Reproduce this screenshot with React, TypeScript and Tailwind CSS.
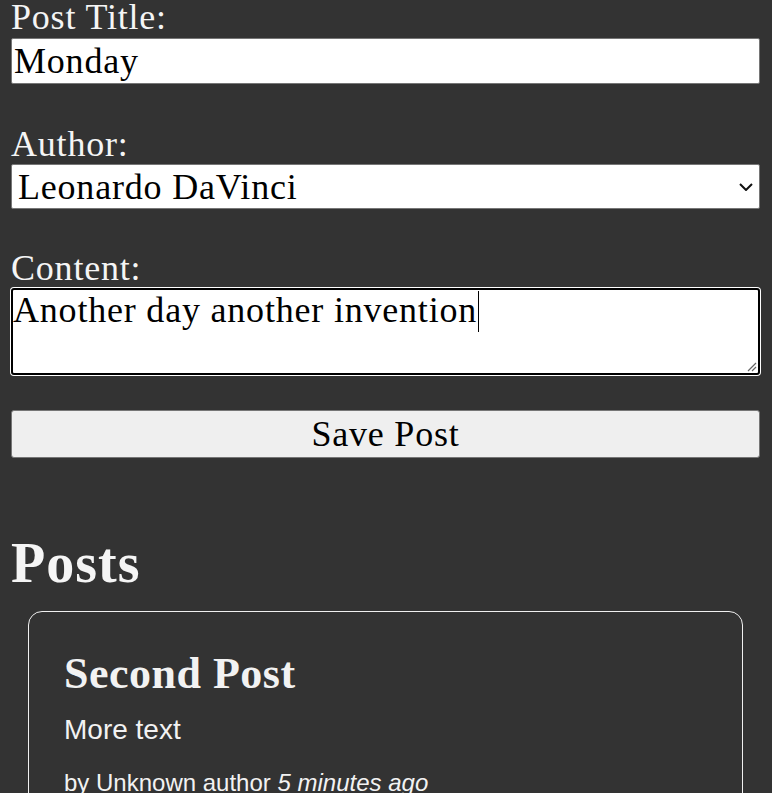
import React from "react";

const serif = { fontFamily: '"Liberation Serif", "Times New Roman", serif' };
const sans = { fontFamily: '"Liberation Sans", Arial, sans-serif' };

const Label = ({ children, className = "" }: { children: React.ReactNode; className?: string }) => (
  <label className={`block h-[36px] text-[36px] leading-[41px] tracking-[0.8px] text-[#f5f5f5] ${className}`}>
    {children}
  </label>
);

export default function App() {
  return (
    <div className="min-h-screen overflow-hidden bg-[#333333]" style={serif}>
      <form className="flex flex-col pl-[11px] pr-[12px]" onSubmit={(e) => e.preventDefault()}>
        <Label className="-mt-[3px] mb-[3px]">Post Title:</Label>
        <input
          defaultValue="Monday"
          className="mt-[2px] h-[46px] w-full rounded-[2px] border border-[#767676] bg-white px-[2px] text-[36px] leading-none tracking-[0.8px] text-black outline-none"
          style={serif}
        />

        <Label className="mt-[40px] mb-[3px]">Author:</Label>
        <div className="relative mt-[1px]">
          <select
            defaultValue="leo"
            className="h-[45px] w-full appearance-none rounded-[2px] border border-[#767676] bg-white pl-[6px] text-[36px] leading-none tracking-[0.8px] text-black outline-none"
            style={serif}
          >
            <option value="leo">Leonardo DaVinci</option>
          </select>
          <svg
            className="pointer-events-none absolute right-[7px] top-[19px]"
            width="14"
            height="8"
            viewBox="0 0 14 8"
          >
            <path d="M1 1 L7 7 L13 1" fill="none" stroke="#111" strokeWidth="2" />
          </svg>
        </div>

        <Label className="mt-[39px] mb-[3px]">Content:</Label>
        <div className="relative mt-[1px] h-[87px] rounded-[3px] border-2 border-black bg-white text-[36px] leading-[41px] tracking-[0.8px] text-black shadow-[0_0_0_1px_#ffffff]">
          <span>Another day another invention</span>
          <span className="ml-[1px] mt-[1px] inline-block h-[41px] w-[1px] bg-black align-top" />
          <svg className="absolute bottom-[1px] right-[1px]" width="12" height="12" viewBox="0 0 12 12">
            <path d="M11 3 L3 11 M11 7 L7 11" stroke="#666" strokeWidth="1.2" />
          </svg>
        </div>

        <button
          type="submit"
          className="mt-[35px] h-[48px] w-full rounded-[3px] border border-[#767676] bg-[#efefef] text-[36px] leading-none tracking-[0.8px] text-black"
          style={serif}
        >
          Save Post
        </button>
      </form>

      <section className="pl-[11px] pr-[12px]">
        <h2 className="mt-[77px] text-[56px] font-bold leading-none tracking-[1px] text-[#f5f5f5]">Posts</h2>
        <article className="mx-[17px] mt-[20px] rounded-[14px] border border-[#f0f0f0] pl-[35px] pr-[35px] pt-[40px] pb-[30px]">
          <h3 className="text-[44px] font-bold leading-none tracking-[0.5px] text-[#f2f2f2]">Second Post</h3>
          <p className="mt-[20px] text-[28px] leading-none text-[#f2f2f2]" style={sans}>
            More text
          </p>
          <p className="mt-[27px] text-[24px] leading-none text-[#f2f2f2]" style={sans}>
            by Unknown author <i>5 minutes ago</i>
          </p>
        </article>
      </section>
    </div>
  );
}
